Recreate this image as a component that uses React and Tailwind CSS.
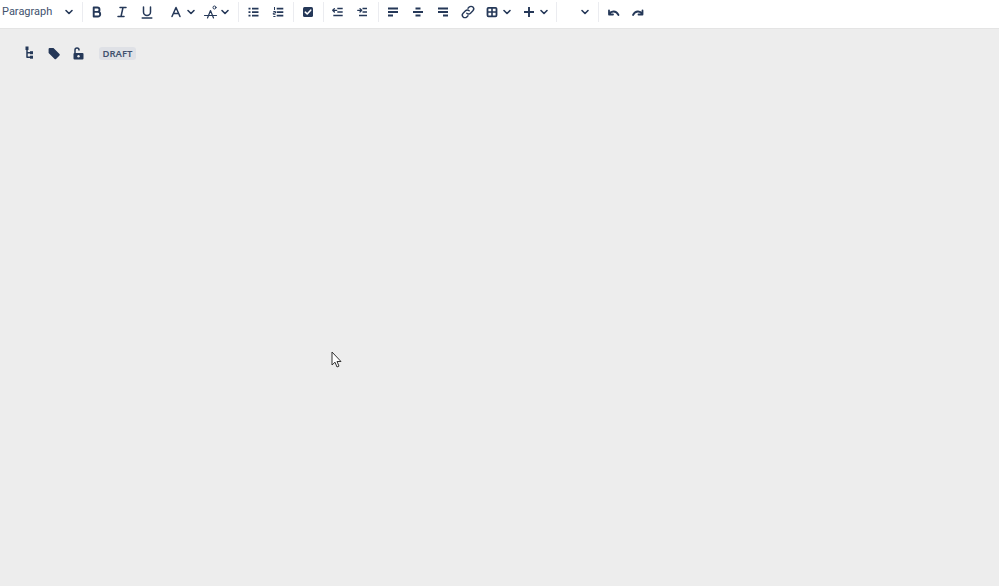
import React from 'react';

const ink = '#253858';

// 16px glyphs, drawn in the same box so they line up in the toolbar
const Chevron = () => (
  <svg width="10" height="10" viewBox="0 0 10 10" fill="none" stroke={ink} strokeWidth="1.6" strokeLinecap="round" strokeLinejoin="round">
    <path d="M2 3.5 5 6.5 8 3.5" />
  </svg>
);

const Glyph = ({ children }) => (
  <svg width="16" height="16" viewBox="0 0 16 16" fill="none" stroke={ink} strokeWidth="1.6" strokeLinecap="round" strokeLinejoin="round">
    {children}
  </svg>
);

const Bold = () => <Glyph><path strokeWidth="1.9" d="M4.700 3.500h3.600a2.200 2.200 0 0 1 0 4.400H4.700zM4.700 7.900h4.200a2.300 2.300 0 0 1 0 4.600H4.700z" /></Glyph>;
const Italic = () => <Glyph><path strokeWidth="1.5" d="M6 3.500h6M4 12.500h6M9 3.500 7 12.500" /></Glyph>;
const Underline = () => <Glyph><path strokeWidth="1.5" d="M4.500 3v5a3.500 3.500 0 0 0 7 0V3M3.200 14h9.600" /></Glyph>;
const TextColor = () => <Glyph><path strokeWidth="1.5" d="M4 12.500 8 3.500l4 9M5.300 9.500h5.400" /></Glyph>;
const TextStyle = () => (
  <Glyph>
    <path strokeWidth="1.200" d="M4.500 14 7.500 6.500l3 7.500M1.500 11.500h12" />
    <circle cx="11.500" cy="3.500" r="1.500" strokeWidth="1" />
  </Glyph>
);
const Bullets = () => (
  <Glyph>
    <path strokeWidth="1.700" strokeLinecap="butt" d="M7 4.700h6.500M7 8.200h6.500M7 11.700h6.500" />
    <path strokeWidth="1.700" strokeLinecap="butt" d="M3.500 4.700h2M3.500 8.200h2M3.500 11.700h2" />
  </Glyph>
);
const Numbers = () => (
  <Glyph>
    <path strokeWidth="1.700" strokeLinecap="butt" d="M6.700 4.700h6.600M6.700 8.200h6.600M6.700 11.700h6.600" />
    <path strokeWidth="1" strokeLinecap="butt" d="M4.500 3v3M3.300 7.500h2.200v1.500H3.300v1.300h2.200M3.300 12.500h2.200" />
  </Glyph>
);
const Task = () => (
  <Glyph>
    <rect x="3" y="3" width="10" height="10" rx="1.500" fill={ink} stroke="none" />
    <path stroke="#fff" strokeWidth="1.600" d="M5.300 8.200 7.200 10 10.700 6.200" />
  </Glyph>
);
const Outdent = () => (
  <Glyph>
    <path strokeWidth="1.700" strokeLinecap="butt" d="M7.300 4.500h5.400M7.300 8h5.400M3.300 11.500h9.400" />
    <path strokeWidth="1.300" d="M6.700 6.300H2.700M4.400 4.600 2.700 6.300l1.700 1.700" />
  </Glyph>
);
const Indent = () => (
  <Glyph>
    <path strokeWidth="1.700" strokeLinecap="butt" d="M7.500 4.500H12M7.500 8H12M4 11.500h8" />
    <path strokeWidth="1.300" d="M2.700 6.300h4M5 4.600l1.700 1.700L5 8" />
  </Glyph>
);
const AlignLeft = () => <Glyph><path strokeWidth="1.800" strokeLinecap="butt" d="M3 4.500h10M3 8h10M3 11.500h5" /></Glyph>;
const AlignCenter = () => <Glyph><path strokeWidth="1.800" strokeLinecap="butt" d="M5.500 4.500h5M3 8h10M5.500 11.500h5" /></Glyph>;
const AlignRight = () => <Glyph><path strokeWidth="1.800" strokeLinecap="butt" d="M3 4.500h10M3 8h10M8 11.500h5" /></Glyph>;
const LinkIcon = () => (
  <Glyph>
    <path strokeWidth="1.400" d="M6.800 9.200a2.600 2.600 0 0 0 3.700 0l2.400-2.400a2.600 2.600 0 0 0-3.700-3.700L8 4.300" />
    <path strokeWidth="1.400" d="M9.200 6.800a2.600 2.600 0 0 0-3.700 0L3.100 9.200a2.600 2.600 0 0 0 3.700 3.700L8 11.700" />
  </Glyph>
);
const TableIcon = () => (
  <Glyph>
    <rect x="3.500" y="3.800" width="9" height="8.500" rx="1" strokeWidth="1.800" />
    <path strokeWidth="1.600" strokeLinecap="butt" d="M8 3.800v8.500M3.500 8h9" />
  </Glyph>
);
const Plus = () => <Glyph><path strokeWidth="1.900" strokeLinecap="butt" d="M8 3v10M3 8h10" /></Glyph>;
const Undo = () => <Glyph><path strokeWidth="1.800" d="M4 6.500v4h4M4 10c2.500-3.500 7-3.500 9.500 1" /></Glyph>;
const Redo = () => <Glyph><path strokeWidth="1.800" d="M12.500 6.500v4h-4M12.500 10C10 6.500 5.500 6.500 3 11" /></Glyph>;

const Hierarchy = () => (
  <Glyph>
    <rect x="4.500" y="1.500" width="3" height="3.500" fill={ink} stroke="none" />
    <rect x="9" y="6.200" width="3" height="3" fill={ink} stroke="none" />
    <rect x="9" y="10.700" width="3" height="3" fill={ink} stroke="none" />
    <path strokeWidth="1.500" strokeLinecap="butt" d="M6 4v8.200h3.500M6 7.700h3.500" />
  </Glyph>
);
const Tag = () => (
  <Glyph>
    <path fill={ink} stroke="none" d="M3.500 3h4l6 6a1 1 0 0 1 0 1.400l-3.500 3.500a1 1 0 0 1-1.400 0l-6-6V4a1 1 0 0 1 1-1z" />
  </Glyph>
);
const Unlock = () => (
  <Glyph>
    <rect x="2.500" y="8" width="10" height="6.500" rx="1" fill={ink} stroke="none" />
    <circle cx="7.500" cy="11.200" r="1.200" fill="#ededed" stroke="none" />
    <path strokeWidth="1.500" d="M4 8V5a2 2 0 0 1 4 0" />
  </Glyph>
);

const Sep = () => <div className="ml-[3px] mr-[1px] h-[20px] w-px shrink-0 bg-[#ebecf0]" />;

const Btn = ({ children }) => (
  <button className="flex h-[24px] w-[25px] shrink-0 items-center justify-center">{children}</button>
);

// icon with a small dropdown arrow beside it
const Drop = ({ children, className }) => (
  <button className={`flex h-[24px] shrink-0 items-center ${className}`}>
    {children}
    <Chevron />
  </button>
);

export default function App() {
  return (
    <div className="relative flex h-[586px] w-[999px] flex-col overflow-hidden bg-[#ededed]">
      <div className="flex h-[29px] shrink-0 items-center border-b border-[#e4e4e4] bg-white pb-[4px]">
        <button className="flex h-[24px] w-[79px] shrink-0 items-center justify-between pl-[2px] pr-[5px] font-['Roboto',sans-serif] text-[11px] text-[#42526e]">
          <span className="pt-[1px]">Paragraph</span>
          <Chevron />
        </button>
        <Sep />
        <Btn><Bold /></Btn>
        <Btn><Italic /></Btn>
        <Btn><Underline /></Btn>
        <Drop className="ml-[9px] w-[29px] gap-[2px]"><TextColor /></Drop>
        <Drop className="ml-[6px] w-[32px] gap-[1px]"><TextStyle /></Drop>
        <Sep />
        <Btn><Bullets /></Btn>
        <Btn><Numbers /></Btn>
        <Sep />
        <Btn><Task /></Btn>
        <Sep />
        <Btn><Outdent /></Btn>
        <Btn><Indent /></Btn>
        <Sep />
        <Btn><AlignLeft /></Btn>
        <Btn><AlignCenter /></Btn>
        <Btn><AlignRight /></Btn>
        <Btn><LinkIcon /></Btn>
        <Drop className="ml-[4px] w-[29px] gap-[2px]"><TableIcon /></Drop>
        <Drop className="ml-[8px] w-[32px] gap-[2px]"><Plus /></Drop>
        <Sep />
        <button className="flex h-[24px] w-[37px] shrink-0 items-center justify-end pr-[5px]"><Chevron /></button>
        <Sep />
        <Btn><Undo /></Btn>
        <Btn><Redo /></Btn>
      </div>
      <div className="flex items-center pl-[16px] pt-[16px]">
        <div className="flex w-[25px] justify-center"><Hierarchy /></div>
        <div className="flex w-[25px] justify-center"><Tag /></div>
        <div className="flex w-[25px] justify-center"><Unlock /></div>
        <span className="ml-[8px] rounded-[3px] bg-[#dfe1e6] px-[3.5px] font-['Noto_Sans',sans-serif] text-[9.5px] leading-[13px] font-semibold text-[#42526e]">DRAFT</span>
      </div>
      {/* mouse pointer caught in the screenshot */}
      <svg className="absolute left-[331px] top-[351px]" width="12" height="18" viewBox="0 0 12 18">
        <path d="M1 1v13l3-2.800 2 4.800 2-.9-2-4.600h4z" fill="#fff" stroke="#333" strokeWidth="1" strokeLinejoin="round" />
      </svg>
    </div>
  );
}
